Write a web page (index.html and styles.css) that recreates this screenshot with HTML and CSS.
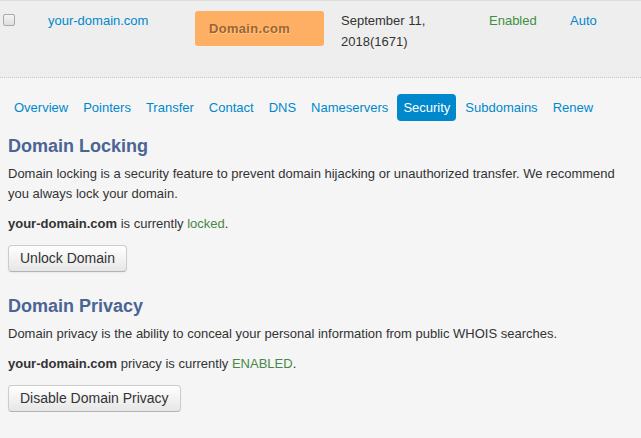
FILE: index.html
```html
<!DOCTYPE html>
<html>
<head>
<meta charset="utf-8">
<link rel="stylesheet" href="styles.css">
</head>
<body>
<div class="page">
  <div class="row">
    <div class="cell c-check"><input type="checkbox" class="chk"></div>
    <div class="cell c-domain"><a class="link">your-domain.com</a></div>
    <div class="cell c-badge"><div class="badge">Domain.com</div></div>
    <div class="cell c-date">September 11,<br>2018(1671)</div>
    <div class="cell c-status"><span class="green">Enabled</span></div>
    <div class="cell c-auto"><a class="link">Auto</a></div>
  </div>
  <div class="content">
    <ul class="tabs">
      <li class="tab">Overview</li>
      <li class="tab">Pointers</li>
      <li class="tab">Transfer</li>
      <li class="tab">Contact</li>
      <li class="tab">DNS</li>
      <li class="tab">Nameservers</li>
      <li class="tab active">Security</li>
      <li class="tab">Subdomains</li>
      <li class="tab">Renew</li>
    </ul>
    <h2 class="heading first">Domain Locking</h2>
    <p class="para">Domain locking is a security feature to prevent domain hijacking or unauthorized transfer. We recommend you always lock your domain.</p>
    <p class="para status"><b>your-domain.com</b> is currently <span class="green">locked</span>.</p>
    <button class="btn">Unlock Domain</button>
    <h2 class="heading second">Domain Privacy</h2>
    <p class="para">Domain privacy is the ability to conceal your personal information from public WHOIS searches.</p>
    <p class="para status"><b>your-domain.com</b> privacy is currently <span class="green">ENABLED</span>.</p>
    <button class="btn">Disable Domain Privacy</button>
  </div>
</div>
</body>
</html>
```
FILE: styles.css
```css
html, body {
  margin: 0;
  padding: 0;
  background: #f5f5f5;
}
body {
  font-family: "Liberation Sans", Arial, sans-serif;
  font-size: 13px;
  color: #333;
}
.page {
  width: 641px;
}
.row {
  display: flex;
  background: #eeeeee;
  border-top: 1px solid #dddddd;
  border-bottom: 1px dotted #c8c8c8;
  box-sizing: border-box;
  height: 78px;
}
.cell {
  padding-top: 9px;
  line-height: 21px;
  box-sizing: border-box;
}
.c-check { width: 48px; padding-left: 3px; padding-top: 13px; }
.c-domain { width: 147px; }
.c-badge { width: 146px; padding-top: 10px; }
.c-date { width: 148px; }
.c-status { width: 81px; }
.c-auto { flex: 1; }
.chk {
  margin: 0;
  width: 12px;
  height: 12px;
  appearance: none;
  -webkit-appearance: none;
  border: 1px solid #a9a9a9;
  border-radius: 2px;
  background: linear-gradient(#f4f4f4, #dedede);
  display: block;
}
.link {
  color: #0088cc;
  text-decoration: none;
}
.green {
  color: #468847;
}
.c-status .green {
  color: #3f8f3f;
}
.badge {
  width: 129px;
  height: 35px;
  box-sizing: border-box;
  background: #ffaf63;
  border-radius: 3px;
  padding-left: 14px;
  font-weight: bold;
  color: #9c6433;
  text-shadow: 1px 1px 0 rgba(255, 220, 170, 0.6);
  line-height: 36px;
  letter-spacing: 0.3px;
}
.content {
  padding: 0 8px;
}
.tabs {
  list-style: none;
  margin: 16px 0 0 0;
  padding: 0;
  display: flex;
  gap: 3px;
}
.tab {
  color: #0088cc;
  padding: 5px 6px;
  line-height: 17px;
  border-radius: 4px;
}
.tab.active {
  background: #0088cc;
  color: #fff;
}
.heading {
  font-size: 18px;
  font-weight: bold;
  color: #4a6494;
  line-height: 22px;
  margin: 0;
}
.heading.first { margin-top: 14px; }
.heading.second { margin-top: 23px; }
.para {
  margin: 7px 0 0 0;
  line-height: 20px;
}
.para.status {
  margin-top: 10px;
}
.btn {
  display: block;
  margin-top: 11px;
  font-family: "Liberation Sans", Arial, sans-serif;
  font-size: 14px;
  color: #333;
  line-height: 19px;
  padding: 3px 11px;
  border: 1px solid #cccccc;
  border-bottom-color: #b3b3b3;
  border-radius: 4px;
  background: linear-gradient(#ffffff, #e6e6e6);
  box-shadow: inset 0 1px 0 rgba(255,255,255,0.2), 0 1px 2px rgba(0,0,0,0.05);
}
```
